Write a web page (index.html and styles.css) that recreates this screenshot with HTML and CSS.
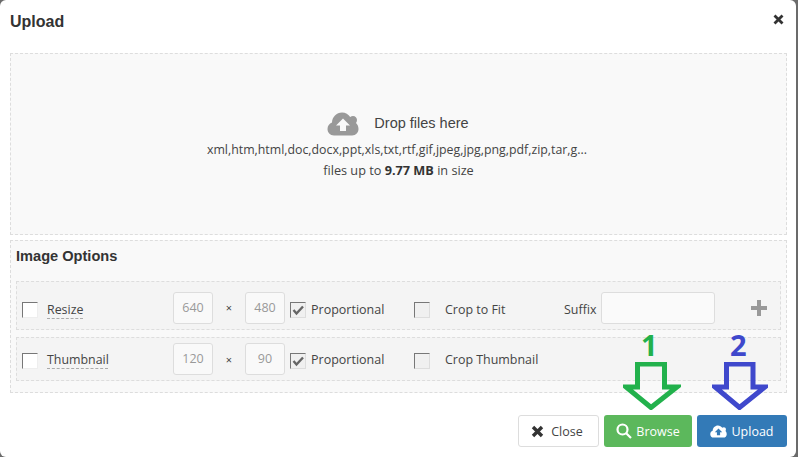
FILE: index.html
```html
<!DOCTYPE html>
<html lang="en">
<head>
<meta charset="utf-8">
<title>Upload</title>
<link rel="stylesheet" href="styles.css">
</head>
<body>
<div class="modal">
  <header class="head">
    <h1 class="title">Upload</h1>
    <svg class="close-x" viewBox="0 0 11 11"><path d="M1.500 1.500l8 8M9.500 1.500l-8 8"/></svg>
  </header>
  <section class="drop">
    <div class="drop-line">
      <svg class="cloud" viewBox="0 0 32 24"><path class="cloud-body" d="M7 23.500C3 23.500 .5 20.500 .5 17C.5 14 2.300 11.500 5 10.500C5.200 5 9.500 .5 15 .5C18.500 .5 21.500 2.300 23.200 5C24 4.300 25 4 26 4C28.300 4 30 5.800 30 8C30 9.200 29.500 10.200 29 11C30.500 12.300 31.500 14.500 31.500 17C31.500 20.500 29 23.500 25 23.500Z"/><path class="cloud-arrow" d="M16 6.500L23 13.500H19V19H13V13.500H9Z"/></svg>
      <span class="drop-title">Drop files here</span>
    </div>
    <p class="drop-text drop-types">xml,htm,html,doc,docx,ppt,xls,txt,rtf,gif,jpeg,jpg,png,pdf,zip,tar,g...</p>
    <p class="drop-text drop-size">files up to <b>9.77 MB</b> in size</p>
  </section>
  <section class="options">
    <h2 class="options-title">Image Options</h2>
    <div class="row row-one">
      <span class="check check-off"></span>
      <span class="name">Resize</span>
      <span class="field">640</span>
      <span class="times">×</span>
      <span class="field">480</span>
      <span class="check check-on"><svg viewBox="0 0 14 14"><path d="M2.500 7l3 3.500L12 3.500"/></svg></span>
      <span class="prop">Proportional</span>
      <span class="check check-grey"></span>
      <span class="crop">Crop to Fit</span>
      <span class="suffix">Suffix</span>
      <span class="field field-wide"></span>
      <svg class="plus" viewBox="0 0 16 16"><path d="M6 0h4v6h6v4h-6v6H6v-6H0V6h6z"/></svg>
    </div>
    <div class="row row-two">
      <span class="check check-off"></span>
      <span class="name">Thumbnail</span>
      <span class="field">120</span>
      <span class="times">×</span>
      <span class="field">90</span>
      <span class="check check-on"><svg viewBox="0 0 14 14"><path d="M2.500 7l3 3.500L12 3.500"/></svg></span>
      <span class="prop">Proportional</span>
      <span class="check check-grey"></span>
      <span class="crop">Crop Thumbnail</span>
    </div>
  </section>
  <footer class="foot">
    <button class="btn btn-close"><svg class="ico-x" viewBox="0 0 13 13"><path d="M2 2l9 9M11 2l-9 9"/></svg>Close</button>
    <button class="btn btn-browse"><svg class="ico-search" viewBox="0 0 16 16"><circle cx="6.500" cy="6.500" r="5"/><path d="M10 10l5 5"/></svg>Browse</button>
    <button class="btn btn-upload"><svg class="ico-cloud" viewBox="0 0 32 24"><path class="cloud-white" d="M7 23.500C3 23.500 .5 20.500 .5 17C.5 14 2.300 11.500 5 10.500C5.200 5 9.500 .5 15 .5C18.500 .5 21.500 2.300 23.200 5C24 4.300 25 4 26 4C28.300 4 30 5.800 30 8C30 9.200 29.500 10.200 29 11C30.500 12.300 31.500 14.500 31.500 17C31.500 20.500 29 23.500 25 23.500Z"/><path class="cloud-blue" d="M16 6.500L23 13.500H19V19H13V13.500H9Z"/></svg>Upload</button>
  </footer>
  <span class="num num-green">1</span>
  <span class="num num-blue">2</span>
  <svg class="arrow arrow-green" viewBox="0 0 58 48"><path d="M14.500 2H41.500V25H54L28 45.500L3 25H14.500Z"/></svg>
  <svg class="arrow arrow-blue" viewBox="0 0 56 48"><path d="M14.500 2H41V25H53L27.500 45.500L3 25H14.500Z"/></svg>
</div>
</body>
</html>
```
FILE: styles.css
```css
* { box-sizing: border-box; }
html, body { margin: 0; height: 100%; overflow: hidden; background: #6b6b6b; }
body { font-family: "Open Sans", "Liberation Sans", sans-serif; font-size: 12.400px; color: #444; }
.modal { position: relative; width: 796px; height: 457px; background: #fff; border-radius: 6px; display: flex; flex-direction: column; padding: 0 9px 0 10px; }
.head { height: 53px; display: flex; align-items: flex-start; justify-content: space-between; padding-top: 13px; }
.title { margin: 0; font: bold 16px/18px "Liberation Sans", Arial, sans-serif; color: #333; }
.close-x { width: 11px; height: 11px; margin: 1px 3px 0 0; fill: none; stroke: #333; stroke-width: 2.800; }
.drop { height: 182px; background: #f9f9f9; border: 1px dashed #ddd; display: flex; flex-direction: column; align-items: center; padding-top: 58px; }
.drop-line { display: flex; align-items: center; gap: 15px; height: 24px; margin-bottom: 4px; margin-right: 1px; }
.cloud { width: 32px; height: 24px; }
.cloud-body { fill: #999; }
.cloud-arrow { fill: #f9f9f9; }
.drop-title { font: 14.500px/24px "Liberation Sans", Arial, sans-serif; color: #444; padding-bottom: 2px; }
.drop-text { margin: 0; font-size: 12.350px; line-height: 20px; color: #444; }
.drop-types { margin-right: 3px; }
.drop-size { font-size: 12.700px; }
.drop-text b { font-weight: 700; color: #333; }
.options { height: 153px; margin-top: 5px; background: #f9f9f9; border: 1px dashed #ddd; padding: 0 5px; }
.options-title { margin: 0; font: bold 14.600px/20px "Liberation Sans", Arial, sans-serif; color: #333; padding-top: 5px; height: 40px; }
.row { display: flex; align-items: center; background: #f4f4f4; border: 1px dashed #ddd; padding-left: 5px; }
.row-one { height: 49px; padding-top: 4px; }
.row-two { height: 44px; margin-top: 7px; }
.row-one .name, .row-one .prop, .row-one .crop, .row-one .suffix { margin-top: 3px; }
.check { width: 16px; height: 16px; flex: none; margin-top: 4px; border-style: solid; border-width: 1px; border-color: #777 #eee #eee #777; background: #fff; }
.check-on, .check-grey { background: #f0f0f0; border-color: #777 #ddd #ddd #777; }
.check-on svg { display: block; width: 14px; height: 14px; fill: none; stroke: #666; stroke-width: 2.400; }
.name { width: 126px; margin-left: 9px; flex: none; text-decoration: underline dashed #aaa; text-underline-offset: 4px; text-decoration-thickness: 1px; text-decoration-skip-ink: none; }
.field { width: 40px; height: 32px; flex: none; background: #f9f9f9; border: 1px solid #ddd; border-radius: 3px; color: #999; font-size: 12.500px; line-height: 30px; text-align: center; }
.times { width: 32px; flex: none; text-align: center; font-size: 11px; }
.field + .check { margin-left: 5px; }
.prop { width: 103px; flex: none; margin-left: 5px; font-size: 12.500px; }
.crop { margin-left: 15px; width: 119px; flex: none; font-size: 12.450px; }
.suffix { width: 37px; flex: none; font-size: 12.450px; }
.field-wide { width: 114px; background: #fafafa; }
.plus { width: 16px; height: 16px; fill: #999; margin-left: 36px; }
.foot { display: flex; justify-content: flex-end; gap: 5px; margin-top: 22px; }
.btn { height: 32px; display: flex; align-items: center; justify-content: center; border-radius: 3px; border: 1px solid transparent; font: 12.500px "Open Sans", sans-serif; padding: 0; }
.btn-close { width: 81px; background: #fff; border-color: #ddd; color: #444; gap: 7px; }
.btn-browse { width: 88px; background: #5cb85c; color: #fff; gap: 4px; }
.btn-upload { width: 90px; background: #337ab7; color: #fff; gap: 4px; }
.ico-x { width: 13px; height: 13px; margin-left: -3px; fill: none; stroke: #333; stroke-width: 3.400; }
.ico-search { width: 16px; height: 16px; fill: none; stroke: #fff; stroke-width: 2.200; }
.ico-cloud { width: 17px; height: 13px; }
.cloud-white { fill: #fff; }
.cloud-blue { fill: #337ab7; }
.num { position: absolute; font: bold 29px/30px "Open Sans", sans-serif; }
.num-green { left: 641px; top: 330px; color: #22b14c; }
.num-blue { left: 730px; top: 330px; color: #3f48cc; }
.arrow { position: absolute; fill: none; stroke-width: 5; }
.arrow-green { left: 623px; top: 362px; width: 58px; height: 48px; stroke: #22b14c; }
.arrow-blue { left: 712px; top: 362px; width: 56px; height: 48px; stroke: #3f48cc; }
```
